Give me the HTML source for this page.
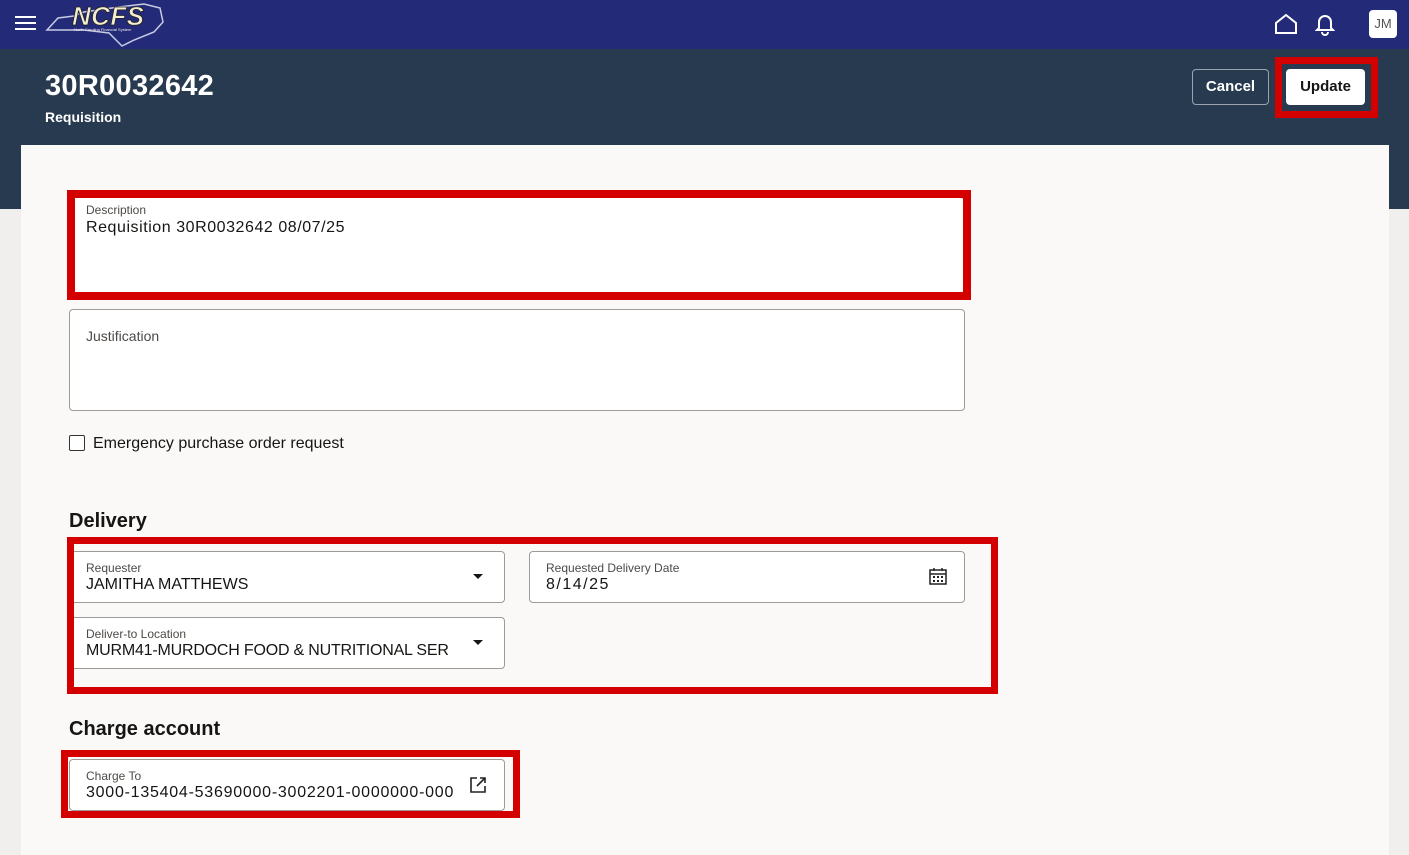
<!DOCTYPE html>
<html><head><meta charset="utf-8"><style>
*{box-sizing:border-box;margin:0;padding:0}
body{width:1409px;height:843px;overflow:hidden;background:#f1efed;font-family:"Liberation Sans",sans-serif;color:#161513;position:relative}
.top{position:absolute;left:0;top:0;width:1409px;height:49px;background:#232a77}
.hdr{position:absolute;left:0;top:49px;width:1409px;height:160px;background:#273a4f}
.card{position:absolute;left:21px;top:145px;width:1368px;height:710px;background:#fbf9f8}
.abs{position:absolute}
.field{position:absolute;background:#fff;border:1px solid #9e9a97;border-radius:4px}
.lbl{position:absolute;font-size:12px;color:#4d4a47}
.val{position:absolute;font-size:16px;color:#161513}
.red{position:absolute;border:7px solid #d40000}
h2{position:absolute;font-size:20px;font-weight:bold}
.caret{position:absolute;width:0;height:0;border-left:5px solid transparent;border-right:5px solid transparent;border-top:5px solid #161513}
</style></head><body>
<div class="top"></div>
<div class="abs" style="left:15px;top:16px;width:21px;height:2px;background:#fff;box-shadow:0 6px 0 #fff,0 12px 0 #fff"></div>
<svg class="abs" style="left:44px;top:0px" width="122" height="48"><path d="M3 30 L14 18 L30 16 L40 12 L75 7 L100 4 L116 8 L119 22 L110 32 L90 40 L78 46 L65 33 L40 30 Z" fill="none" stroke="#c8cbe4" stroke-width="1.5"/><text x="28" y="25" font-family="Liberation Sans" font-weight="bold" font-style="italic" font-size="26" fill="#f4eed0" stroke="#222" stroke-width=".8" textLength="72">NCFS</text><text x="30" y="31" font-size="4" fill="#eee">North Carolina Financial System</text></svg>
<svg class="abs" style="left:1274px;top:13px" width="24" height="22"><path d="M2 10 L12 2 L22 10 V20 H2 Z" fill="none" stroke="#fff" stroke-width="2"/></svg>
<svg class="abs" style="left:1315px;top:12px" width="20" height="24"><path d="M4 16 V10 A6 6 0 0 1 16 10 V16 L18 18 H2 Z M7 20 A3 3 0 0 0 13 20" fill="none" stroke="#fff" stroke-width="2"/></svg>
<div class="abs" style="left:1369px;top:10px;width:28px;height:28px;background:#fff;border-radius:4px;font-size:13px;color:#555;text-align:center;line-height:28px">JM</div>
<div class="hdr"></div>
<div class="abs" style="left:45px;top:70px;font-size:29px;font-weight:bold;color:#fff;letter-spacing:.3px">30R0032642</div>
<div class="abs" style="left:45px;top:109px;font-size:14px;font-weight:bold;color:#fff">Requisition</div>
<div class="abs" style="left:1192px;top:69px;width:77px;height:36px;border:1px solid #9aa4ae;border-radius:4px;color:#fff;font-weight:bold;font-size:15px;text-align:center;line-height:34px">Cancel</div>
<div class="red" style="left:1275px;top:57px;width:103px;height:61px"></div>
<div class="abs" style="left:1286px;top:69px;width:79px;height:36px;background:#fff;border-radius:4px;font-weight:bold;font-size:15px;text-align:center;line-height:36px">Update</div>
<div class="card"></div>
<div class="field" style="left:69px;top:197px;width:896px;height:100px"></div>
<div class="red" style="left:67px;top:190px;width:904px;height:110px;border-width:8px"></div>
<div class="lbl" style="left:86px;top:203px">Description</div>
<div class="val" style="left:86px;top:219px;letter-spacing:.55px">Requisition 30R0032642 08/07/25</div>
<div class="field" style="left:69px;top:309px;width:896px;height:102px"></div>
<div class="abs" style="left:86px;top:328px;font-size:14px;color:#4d4a47">Justification</div>
<div class="abs" style="left:69px;top:435px;width:16px;height:16px;border:1.5px solid #333;border-radius:2px;background:#fff"></div>
<div class="abs" style="left:93px;top:435px;font-size:16px">Emergency purchase order request</div>
<h2 style="left:69px;top:510px">Delivery</h2>
<div class="field" style="left:69px;top:551px;width:436px;height:52px"></div>
<div class="lbl" style="left:86px;top:561px">Requester</div>
<div class="val" style="left:86px;top:576px">JAMITHA MATTHEWS</div>
<div class="caret" style="left:473px;top:574px"></div>
<div class="field" style="left:529px;top:551px;width:436px;height:52px"></div>
<div class="lbl" style="left:546px;top:561px">Requested Delivery Date</div>
<div class="val" style="left:546px;top:576px;letter-spacing:1.5px">8/14/25</div>
<svg class="abs" style="left:929px;top:567px" width="18" height="18"><rect x="1" y="3" width="16" height="14" fill="none" stroke="#222" stroke-width="1.5"/><line x1="1" y1="7" x2="17" y2="7" stroke="#222" stroke-width="1.5"/><line x1="5" y1="1" x2="5" y2="4" stroke="#222" stroke-width="1.5"/><line x1="13" y1="1" x2="13" y2="4" stroke="#222" stroke-width="1.5"/><g fill="#222"><rect x="4" y="9" width="2" height="2"/><rect x="8" y="9" width="2" height="2"/><rect x="12" y="9" width="2" height="2"/><rect x="4" y="13" width="2" height="2"/><rect x="8" y="13" width="2" height="2"/><rect x="12" y="13" width="2" height="2"/></g></svg>
<div class="field" style="left:69px;top:617px;width:436px;height:52px"></div>
<div class="lbl" style="left:86px;top:627px">Deliver-to Location</div>
<div class="val" style="left:86px;top:642px;letter-spacing:-.2px">MURM41-MURDOCH FOOD &amp; NUTRITIONAL SER</div>
<div class="caret" style="left:473px;top:640px"></div>
<div class="red" style="left:67px;top:537px;width:931px;height:157px"></div>
<h2 style="left:69px;top:718px">Charge account</h2>
<div class="field" style="left:69px;top:759px;width:436px;height:52px"></div>
<div class="lbl" style="left:86px;top:769px">Charge To</div>
<div class="val" style="left:86px;top:784px;letter-spacing:.75px">3000-135404-53690000-3002201-0000000-000</div>
<svg class="abs" style="left:469px;top:776px" width="18" height="18"><path d="M8 2 H2 V16 H16 V10 M11 2 H16 V7 M16 2 L8 10" fill="none" stroke="#222" stroke-width="1.6"/></svg>
<div class="red" style="left:61px;top:750px;width:459px;height:68px"></div>
</body></html>
